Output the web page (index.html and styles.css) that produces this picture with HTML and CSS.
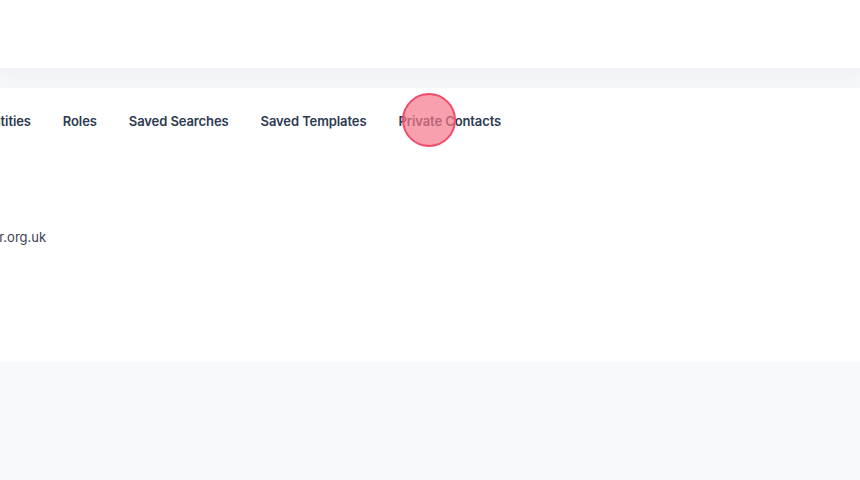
FILE: index.html
```html
<!DOCTYPE html>
<html lang="en">
<head>
    <meta charset="UTF-8">
    <meta name="viewport" content="width=device-width, initial-scale=1.0">
    <title>Contacts</title>
    <link rel="stylesheet" href="styles.css">
</head>
<body>

    <header class="top-bar"></header>

    <div class="page">
        <section class="card">
            <nav class="tabs">
                <a class="tab">Entities</a>
                <a class="tab">Roles</a>
                <a class="tab">Saved Searches</a>
                <a class="tab">Saved Templates</a>
                <a class="tab tab-clicked">Private Contacts</a>
            </nav>

            <div class="details">
                <p class="email">info@localvolunteer.org.uk</p>
            </div>
        </section>
    </div>

</body>
</html>
```

FILE: styles.css
```css
body {
    margin: 0;
    font-family: 'Inter', 'Lato', sans-serif;
    background-color: #f8f9fb;
    color: #2d3a52;
    overflow: hidden;
}
.top-bar {
    height: 68px;
    background-color: #ffffff;
}
.page {
    padding-top: 20px;
    background: linear-gradient(#f1f2f5, #f8f9fb 20px);
}
.card {
    height: 274px;
    background-color: #ffffff;
    box-shadow: 0 6px 18px rgba(40, 50, 70, 0.08);
    overflow: hidden;
}
.tabs {
    display: flex;
    gap: 32px;
    margin-left: -15px;
    padding-top: 25px;
}
.tab {
    font-size: 13px;
    font-weight: 600;
    letter-spacing: -0.1px;
    color: #2d3a52;
    white-space: nowrap;
    line-height: 16px;
}
.tab-clicked {
    position: relative;
}
.tab-clicked::after {
    content: '';
    position: absolute;
    left: 4px;
    top: -20px;
    width: 50px;
    height: 50px;
    border: 2px solid #f24b67;
    border-radius: 50%;
    background-color: rgba(245, 120, 138, 0.7);
}
.details {
    padding-top: 100px;
}
.email {
    margin: 0 0 0 -118px;
    font-size: 13px;
    color: #3a4252;
    line-height: 16px;
}
```
